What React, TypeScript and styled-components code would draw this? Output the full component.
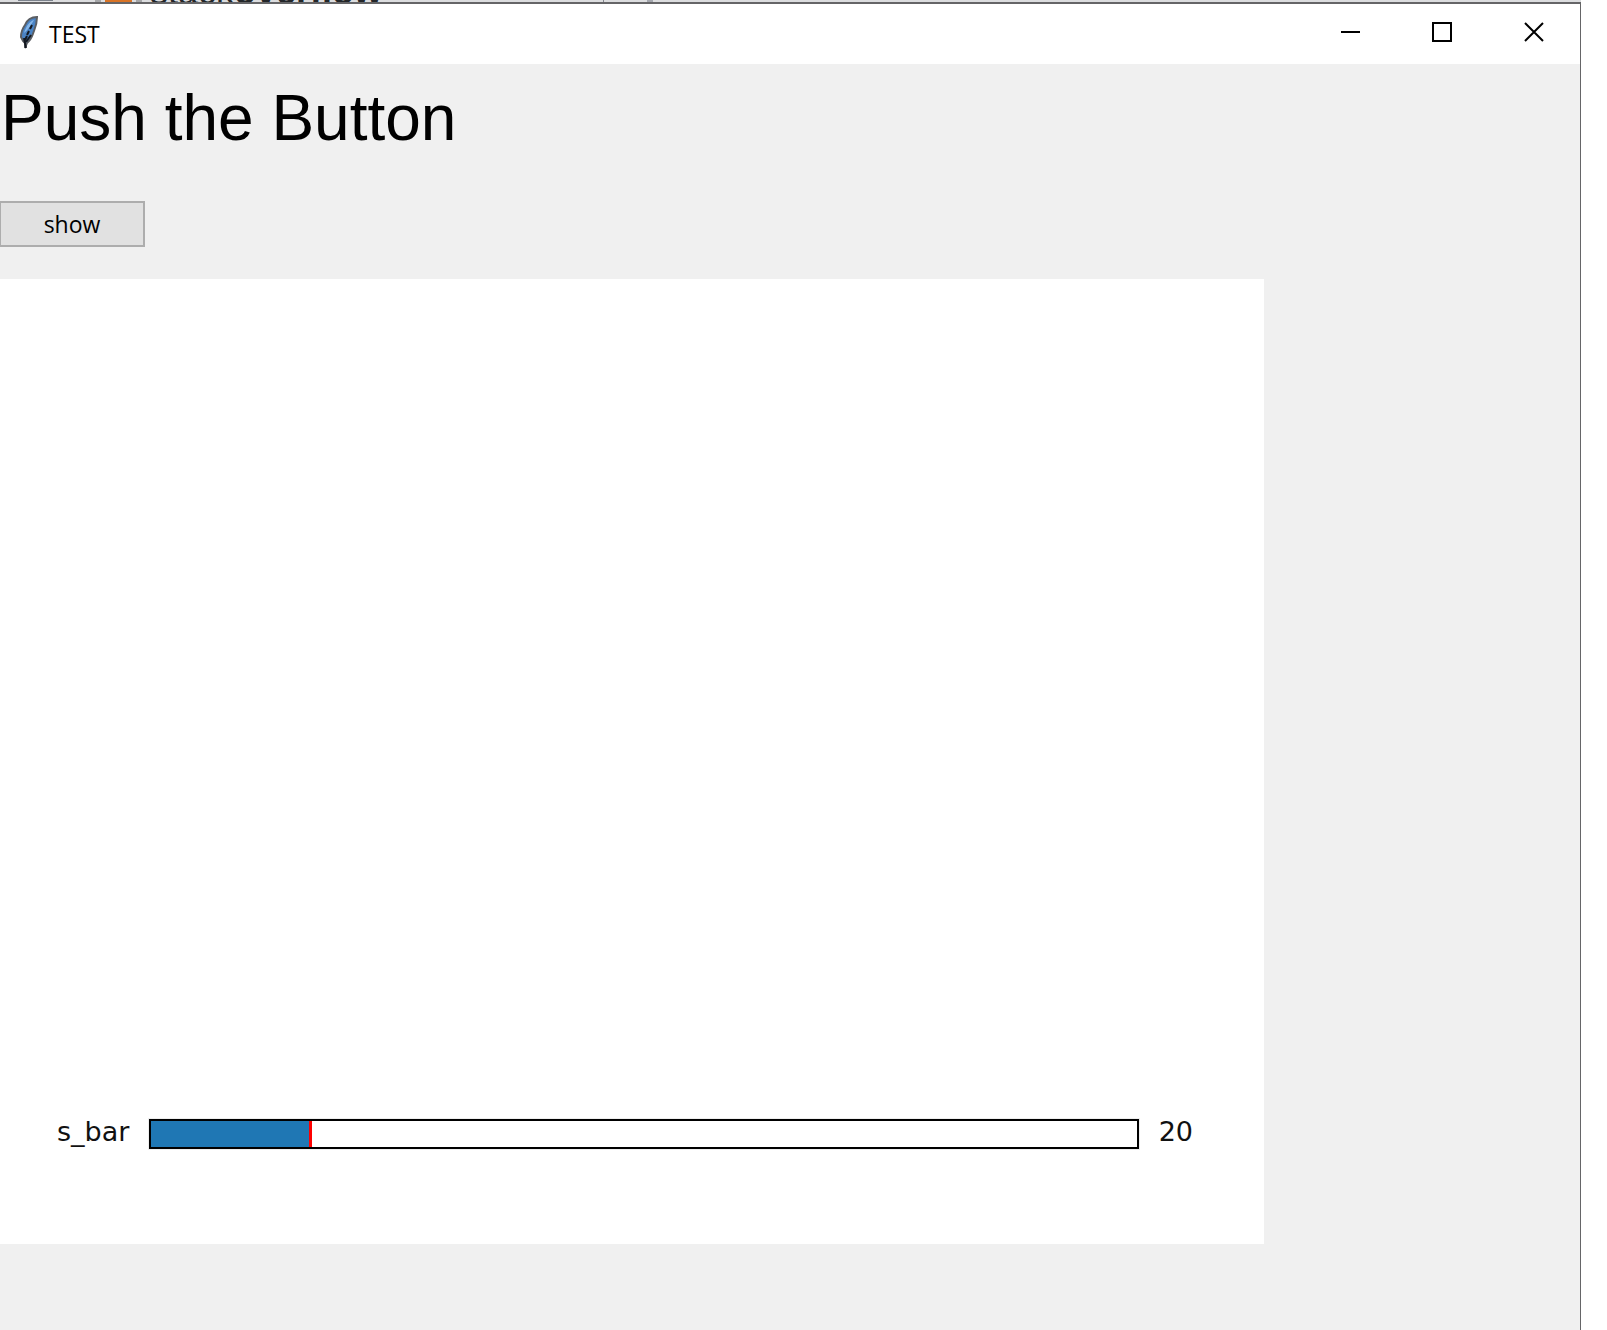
import React, { useState } from "react";
import styled, { createGlobalStyle } from "styled-components";

const GlobalStyle = createGlobalStyle`
  *, *::before, *::after { box-sizing: border-box; }
  body { margin: 0; background: #ffffff; }
  button, input { font: inherit; color: inherit; }
`;

const uiFont = `"Open Sans", "Noto Sans", sans-serif`;
const plotFont = `"DejaVu Sans", sans-serif`;

const Desktop = styled.div`
  display: flex;
  flex-direction: column;
  min-height: 100vh;
  padding-right: 26px;
`;

const BrowserStrip = styled.div`
  display: flex;
  align-items: flex-end;
  height: 2px;
  overflow: hidden;
  background: #dcdddf;
`;

const StripMark = styled.span<{ $width: number; $gap: number; $color: string; $height?: number }>`
  flex: none;
  align-self: flex-start;
  width: ${(p) => p.$width}px;
  height: ${(p) => p.$height ?? 2}px;
  margin-left: ${(p) => p.$gap}px;
  background: ${(p) => p.$color};
`;

const TabLogo = styled.span`
  flex: none;
  width: 452px;
  margin: 0 0 -8px 8px;
  font: 36px/36px "Liberation Sans", Arial, sans-serif;
  color: #232629;
`;

const AppWindow = styled.main`
  display: flex;
  flex: 1;
  flex-direction: column;
  border-top: 2px solid #656567;
  border-right: 1px solid #656567;
  background: #f0f0f0;
`;

const TitleBar = styled.header`
  display: flex;
  align-items: center;
  height: 60px;
  padding-left: 20px;
  background: #ffffff;
`;

const FeatherIcon = styled.svg`
  width: 18px;
  height: 34px;
  margin: 0 11px 2px 0;
`;

const WindowTitle = styled.span`
  flex: 1;
  font: 23px/32px ${uiFont};
  color: #000000;
`;

const WindowButton = styled.button`
  display: flex;
  align-items: center;
  justify-content: center;
  width: 92px;
  height: 60px;
  padding: 0 0 4px;
  border: 0;
  background: transparent;
`;

const Glyph = styled.svg`
  width: 20px;
  height: 20px;
  fill: none;
  stroke: #000000;
  stroke-width: 2;
`;

const Client = styled.section`
  display: flex;
  flex-direction: column;
  align-items: flex-start;
  padding-top: 18px;
`;

const Heading = styled.h1`
  margin: 0 0 47px;
  padding-left: 1px;
  font: 400 64px/72px "Liberation Sans", Arial, sans-serif;
  color: #000000;
`;

const ShowButton = styled.button`
  width: 145px;
  height: 46px;
  margin-bottom: 32px;
  padding: 0;
  border: 2px solid #adadad;
  border-left-width: 1px;
  background: #e1e1e1;
  font: 23px/32px ${uiFont};
  color: #000000;
`;

const Figure = styled.div`
  display: flex;
  flex-direction: column;
  justify-content: flex-end;
  width: 80%;
  min-height: 965px;
  padding: 0 71px 95px 57px;
  background: #ffffff;
`;

const SliderRow = styled.div`
  display: flex;
  align-items: flex-start;
  gap: 20px;
  font: 27px/26px ${plotFont};
  color: #111111;
`;

const Slider = styled.input`
  flex: 1;
  min-width: 0;
  height: 30px;
  margin: 0;
  border: 2px solid #000000;
  appearance: none;
  outline: 1px solid #eeeeee;

  &::-webkit-slider-thumb {
    appearance: none;
    width: 3px;
    height: 26px;
    background: #ff0000;
  }
`;

const MAX_VALUE = 125;

export default function App() {
  const [value, setValue] = useState(20);
  const filled = `${(value / MAX_VALUE) * 100}%`;

  return (
    <>
      <GlobalStyle />
      <Desktop>
        <BrowserStrip>
          <StripMark $width={35} $gap={18} $color="#7b828c" $height={1} />
          <StripMark $width={6} $gap={42} $color="#a5a6a8" />
          <StripMark $width={27} $gap={4} $color="#d97426" />
          <StripMark $width={6} $gap={4} $color="#a5a6a8" />
          <TabLogo>
            stack<b>overflow</b>
          </TabLogo>
          <StripMark $width={1} $gap={1} $color="#83868f" />
          <StripMark $width={6} $gap={43} $color="#a4a7ae" />
        </BrowserStrip>
        <AppWindow>
          <TitleBar>
            <FeatherIcon viewBox="0 0 18 34" aria-hidden="true">
              <path d="M17 1C11 1 7 4 5 9C2 13 1 17 1 21L3 25L5 27L5 32L7 27C12 23 12 20 14 15C16 10 17 6 17 1Z" fill="#4a83c4" stroke="#5b5e63" strokeWidth="2" />
              <path d="M14 4C10 5 6 10 4 17C8 14 11 9 14 4Z" fill="#86b6e8" />
              <path d="M12 9L10 13M9 15L7 19M7 20L5 24M4 22L6 32M11 19L6 26" fill="none" stroke="#131820" strokeWidth="2" />
            </FeatherIcon>
            <WindowTitle>TEST</WindowTitle>
            <WindowButton type="button" aria-label="Minimize">
              <Glyph viewBox="0 0 20 20"><path d="M1 10H20" /></Glyph>
            </WindowButton>
            <WindowButton type="button" aria-label="Maximize">
              <Glyph viewBox="0 0 20 20"><path d="M1 1H19V19H1Z" /></Glyph>
            </WindowButton>
            <WindowButton type="button" aria-label="Close">
              <Glyph viewBox="0 0 20 20"><path d="M1 1L19 19M19 1L1 19" /></Glyph>
            </WindowButton>
          </TitleBar>
          <Client>
            <Heading>Push the Button</Heading>
            <ShowButton type="button">show</ShowButton>
            <Figure>
              <SliderRow>
                <label htmlFor="s-bar">s_bar</label>
                <Slider
                  id="s-bar"
                  type="range"
                  min={0}
                  max={MAX_VALUE}
                  value={value}
                  onChange={(e) => setValue(Number(e.target.value))}
                  style={{ background: `linear-gradient(to right, #1f77b4 ${filled}, #ffffff ${filled})` }}
                />
                <output htmlFor="s-bar">{value}</output>
              </SliderRow>
            </Figure>
          </Client>
        </AppWindow>
      </Desktop>
    </>
  );
}
